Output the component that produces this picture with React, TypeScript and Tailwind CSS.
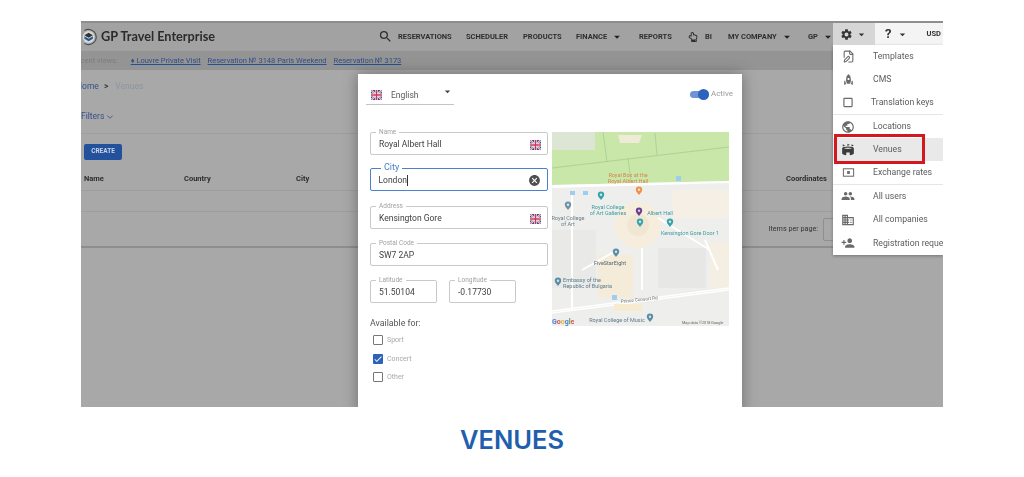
import type { ReactNode } from "react";
import {
  MdArrowDropDown,
  MdCancel,
  MdCheck,
  MdOutlineCropSquare,
  MdOutlineDomain,
  MdPeople,
  MdPersonAdd,
  MdPublic,
  MdRocket,
  MdSearch,
  MdSettings,
  MdStadium,
} from "react-icons/md";
import { LuFilePen, LuChevronDown } from "react-icons/lu";
import { FaRegHandPointUp } from "react-icons/fa";

const UkFlag = () => (
  <svg viewBox="0 0 60 50" preserveAspectRatio="none" className="w-[11px] h-[10px] shrink-0">
    <rect width="60" height="50" fill="#3f4f8f" />
    <path d="M0 0L60 50M60 0L0 50" stroke="#fff" strokeWidth="9" />
    <path d="M0 0L60 50M60 0L0 50" stroke="#c8385a" strokeWidth="4" />
    <path d="M30 0V50M0 25H60" stroke="#fff" strokeWidth="14" />
    <path d="M30 0V50M0 25H60" stroke="#c8385a" strokeWidth="8" />
  </svg>
);

const Logo = () => (
  <svg viewBox="0 0 20 20" className="w-[17px] h-[20px] shrink-0">
    <path d="M4 2.5A9 9 0 1 1 4 17.5" fill="none" stroke="#444" strokeWidth="1.2" />
    <circle cx="9" cy="10" r="7" fill="#d9d9d9" />
    <path d="M9 5l5 3-5 3-5-3z" fill="#333" />
    <path d="M4 9l5 3 5-3v3l-5 3-5-3z" fill="#1f5c96" />
  </svg>
);

const ExchangeIcon = () => (
  <svg viewBox="0 0 14 14" className="w-[13px] h-[13px]">
    <rect x="1.5" y="3" width="11" height="8" fill="none" stroke="currentColor" strokeWidth="1.1" />
    <rect x="5.5" y="5.5" width="3" height="3" fill="currentColor" />
  </svg>
);

const NavLink = ({ children, caret, className = "" }: { children: ReactNode; caret?: boolean; className?: string }) => (
  <div className={`flex items-center shrink-0 text-[7.5px] font-bold text-[#2e2e2e] ${className}`}>
    <span>{children}</span>
    {caret && <MdArrowDropDown className="ml-[3px] text-[14px] text-[#222]" />}
  </div>
);

const Field = ({
  label,
  value,
  className,
  flag,
}: {
  label: string;
  value: string;
  className: string;
  flag?: boolean;
}) => (
  <div className={`relative flex items-center justify-between h-[23px] border border-[#c9c9c9] rounded-[2px] pl-2 pr-[6px] pt-[2px] ${className}`}>
    <span className="absolute left-[5px] -top-[5px] bg-white px-[3px] text-[6.5px] leading-[8px] text-[#a2a2a2]">{label}</span>
    <span className="text-[8.5px] text-[#3f3f3f]">{value}</span>
    {flag && <UkFlag />}
  </div>
);

const Check = ({ label, checked }: { label: string; checked?: boolean }) => (
  <div className="flex items-center h-[18.5px] pl-[3px]">
    {checked ? (
      <span className="flex items-center justify-center w-[10px] h-[10px] rounded-[1px] bg-[#2d62b8]">
        <MdCheck className="text-white text-[10px]" />
      </span>
    ) : (
      <span className="w-[10px] h-[10px] rounded-[1px] border border-[#777]" />
    )}
    <span className="ml-[4px] text-[7px] text-[#a8a8a8]">{label}</span>
  </div>
);

const Pin = ({ x, y, color }: { x: number; y: number; color: string }) => (
  <g>
    <path d={`M${x} ${y + 5}c-1.6-2.2-3.2-3.4-3.2-5.2a3.2 3.2 0 0 1 6.4 0c0 1.8-1.6 3-3.2 5.2z`} fill={color} />
    <circle cx={x} cy={y - 0.3} r="1.2" fill="#fff" fillOpacity="0.75" />
  </g>
);

const MapPicture = () => (
  <svg viewBox="0 0 177 194" className="w-[177px] h-[194px] shrink-0 font-['Roboto',sans-serif]">
    <rect width="177" height="194" fill="#eeeeec" />
    <path d="M0 0H177V49L0 53z" fill="#c8e7a9" />
    <rect width="43" height="18" fill="#dde6d4" />
    <path d="M66 3h24l-3 8H68z" fill="#eeebd7" />
    <path d="M0 36L177 15M51 0l4 30M103 1l2 22M76 26l3 24" stroke="#a3c98c" strokeWidth="0.7" fill="none" />
    <path d="M0 53L177 49V51L0 56z" fill="#fff" />
    <rect x="120" y="58" width="57" height="28" fill="#f5efe5" />
    <rect x="0" y="98" width="44" height="58" fill="#e9e9e7" />
    <rect x="46" y="123" width="35" height="43" fill="#f4ecd9" />
    <rect x="106" y="116" width="48" height="40" fill="#e7e7e5" />
    <rect x="158" y="110" width="19" height="46" fill="#f5efe3" />
    <circle cx="86" cy="93" r="23" fill="#f6eddd" />
    <circle cx="86" cy="93" r="11" fill="#f0e6d3" />
    <path d="M90 116V158M106 86L158 118M20 60V178M30 138L62 120M153 108L166 138" stroke="#fff" strokeWidth="2" fill="none" />
    <path d="M0 179L177 156M0 181L177 158" stroke="#fff" strokeWidth="1.6" />
    <rect x="62" y="172" width="28" height="7" fill="#f6ead0" />
    <rect x="124" y="44" width="5" height="5" fill="#9ecdf0" />
    <rect x="18" y="59" width="5" height="4" fill="#9ecdf0" />
    <rect x="31" y="59" width="5" height="4" fill="#9ecdf0" />
    <rect x="60" y="163" width="5" height="5" fill="#9ecdf0" />
    <Pin x={87} y={58} color="#ee8f4b" />
    <Pin x={49} y={63} color="#35a5a8" />
    <Pin x={16} y={73} color="#6e93a8" />
    <Pin x={88} y={90} color="#35a5a8" />
    <Pin x={87} y={79} color="#6b3d90" />
    <Pin x={118} y={90} color="#35a5a8" />
    <Pin x={64} y={120} color="#5d8ca5" />
    <Pin x={6} y={149} color="#5d8ca5" />
    <Pin x={98} y={185} color="#5d8ca5" />
    <g fontSize="5.5" textAnchor="middle">
      <text x="76" y="45" fill="#d9844e">Royal Box at the</text>
      <text x="76" y="51" fill="#d9844e">Royal Albert Hall</text>
      <text x="56" y="77" fill="#3c9ca0">Royal College</text>
      <text x="56" y="83" fill="#3c9ca0">of Art Galleries</text>
      <text x="108" y="83" fill="#3c9ca0">Albert Hall</text>
      <text x="16" y="88" fill="#6b7d88">Royal College</text>
      <text x="16" y="94" fill="#6b7d88">of Art</text>
      <text x="138" y="103" fill="#3c9ca0">Kensington Gore Door 1</text>
      <text x="58" y="133" fill="#56666f">FiveStarEight</text>
      <text x="65" y="190" fill="#5b7a8c">Royal College of Music</text>
    </g>
    <g fontSize="5.5" fill="#5b7a8c">
      <text x="11" y="150">Embassy of the</text>
      <text x="11" y="156">Republic of Bulgaria</text>
    </g>
    <text x="69" y="171" fontSize="4.6" fill="#6f6f6f" transform="rotate(-6 69 171)">Prince Consort Rd</text>
    <text x="0" y="192" fontSize="7" fontWeight="700">
      <tspan fill="#4a7fd8">G</tspan>
      <tspan fill="#d9574a">o</tspan>
      <tspan fill="#e5b83c">o</tspan>
      <tspan fill="#4a7fd8">g</tspan>
      <tspan fill="#53a75c">l</tspan>
      <tspan fill="#d9574a">e</tspan>
    </text>
    <text x="130" y="192" fontSize="3.8" fill="#666">Map data ©2018 Google</text>
  </svg>
);

const menuItems = [
  { label: "Templates", icon: <LuFilePen className="text-[13px]" /> },
  { label: "CMS", icon: <MdRocket className="text-[13px]" /> },
  { label: "Translation keys", icon: <MdOutlineCropSquare className="text-[15px]" />, shift: true, rule: true },
  { label: "Locations", icon: <MdPublic className="text-[14px]" /> },
  { label: "Venues", icon: <MdStadium className="text-[15px] text-[#3c3c3c]" />, active: true },
  { label: "Exchange rates", icon: <ExchangeIcon />, rule: true },
  { label: "All users", icon: <MdPeople className="text-[14px]" /> },
  { label: "All companies", icon: <MdOutlineDomain className="text-[14px]" /> },
  { label: "Registration requests", icon: <MdPersonAdd className="text-[14px]" /> },
];

export default function App() {
  return (
    <div className="w-[1024px] h-[477px] bg-white overflow-hidden font-['Roboto',sans-serif]">
      <div className="pt-[21px] pl-[81px]">
        <div className="relative w-[862px] h-[386px] bg-[#a8a8a8] overflow-hidden blur-[0.5px]">
          {/* nav bar */}
          <div className="flex items-center h-[30px] bg-[#a2a2a2] border-t-2 border-[#8e8e8e] whitespace-nowrap">
            <Logo />
            <span className="ml-[3px] w-[277px] text-[12.7px] font-['Lato',sans-serif] font-bold text-[#2b2b2b]">GP Travel Enterprise</span>
            <MdSearch className="text-[15px] text-[#2e2e2e] -mt-[2px]" />
            <NavLink className="ml-[5px] w-[68px]">RESERVATIONS</NavLink>
            <NavLink className="w-[57px]">SCHEDULER</NavLink>
            <NavLink className="w-[53px]">PRODUCTS</NavLink>
            <NavLink caret className="w-[63px]">FINANCE</NavLink>
            <NavLink className="w-[45px]">REPORTS</NavLink>
            <span className="flex justify-center w-[18px] text-[10px] text-[#2e2e2e]">
              <FaRegHandPointUp />
            </span>
            <NavLink className="w-[26px] pl-[3px]">BI</NavLink>
            <NavLink caret className="w-[80px]">MY COMPANY</NavLink>
            <NavLink caret>GP</NavLink>
          </div>

          {/* recent views */}
          <div className="flex items-center h-[19px] bg-[#949494] text-[7.5px] whitespace-nowrap overflow-hidden">
            <span className="-ml-[9px] text-[#7d7d7d]">Recent views:</span>
            <span className="ml-[13px] text-[#2b4f8e] underline">♦ Louvre Private Visit</span>
            <span className="ml-[7px] text-[#2b4f8e] underline">Reservation № 3148 Paris Weekend</span>
            <span className="ml-[7px] text-[#2b4f8e] underline">Reservation № 3173</span>
          </div>

          {/* breadcrumb */}
          <div className="flex items-center h-[31px] pt-[2px] text-[8.5px] -ml-[5px]">
            <span className="text-[#35508a]">Home</span>
            <span className="ml-[5px] text-[#3a3a3a] font-bold">&gt;</span>
            <span className="ml-[7px] text-[#8d93a3]">Venues</span>
          </div>

          {/* filters */}
          <div className="flex items-center h-[33px] border-b border-[#9e9e9e] text-[8.5px] text-[#35508a] pb-[1px]">
            Filters
            <LuChevronDown className="ml-[1px] text-[10px]" />
          </div>

          <button className="block ml-[3px] mt-[10px] w-[38px] h-[16px] rounded-[2px] bg-[#23519c] text-[6.5px] font-bold text-[#c8d3e6]">
            CREATE
          </button>

          {/* table header */}
          <div className="flex items-center h-[24px] mt-[7px] pt-[1px] border-b border-[#9e9e9e] text-[7.5px] font-bold text-[#2e2e2e]">
            <span className="ml-[3px] w-[100px]">Name</span>
            <span className="w-[112px]">Country</span>
            <span className="w-[490px]">City</span>
            <span>Coordinates</span>
          </div>
          <div className="h-[21px] border-b border-[#9e9e9e]" />
          <div className="flex items-center justify-end h-[36px] border-b-2 border-[#8e8e8e] pr-[100px] text-[7.2px] text-[#333]">
            Items per page:
            <div className="ml-[5px] w-[20px] h-[23px] border border-[#8f8f8f] rounded-[2px]" />
          </div>

          {/* modal */}
          <div className="absolute left-[277px] top-[53px] w-[384px] h-[340px] bg-white shadow-[0_0_14px_rgba(0,0,0,0.35)] pl-[12px] pr-[9px]">
            <div className="flex items-start justify-between pt-[12px]">
              <div className="relative -ml-[4px] flex items-center w-[88px] h-[19px] pl-[5px] border-b border-[#c4c4c4]">
                <UkFlag />
                <span className="ml-[9px] text-[8.5px] text-[#5a5a5a]">English</span>
                <MdArrowDropDown className="absolute right-0 -top-[1px] text-[13px] text-[#444]" />
              </div>
              <div className="flex items-center mt-[2px]">
                <div className="relative w-[19px] h-[7px] rounded-full bg-[#6f94d6]">
                  <div className="absolute right-0 -top-[2px] w-[11px] h-[11px] rounded-full bg-[#2d62bd]" />
                </div>
                <span className="ml-[2px] text-[8px] text-[#9a9a9a]">Active</span>
              </div>
            </div>
            <div className="flex mt-[27px]">
              <div className="w-[182px] shrink-0">
                <Field className="w-[178px]" label="Name" value="Royal Albert Hall" flag />
                <div className="relative flex items-center justify-between w-[178px] h-[23px] mt-[13px] border-[1.5px] border-[#4a80cc] rounded-[2px] pl-[7.5px] pr-[6px] pt-[2px]">
                  <span className="absolute left-[10px] -top-[7px] bg-white px-[3px] text-[9px] leading-[10px] text-[#4a80cc]">City</span>
                  <span className="text-[8.5px] text-[#3f3f3f] border-r border-[#333] leading-[11px]">London</span>
                  <MdCancel className="text-[13px] text-[#4f4f4f]" />
                </div>
                <Field className="w-[178px] mt-[15px]" label="Address" value="Kensington Gore" flag />
                <Field className="w-[178px] mt-[14px]" label="Postal Code" value="SW7 2AP" />
                <div className="flex gap-3 mt-[14px]">
                  <Field className="w-[67px]" label="Latitude" value="51.50104" />
                  <Field className="w-[67px]" label="Longitude" value="-0.17730" />
                </div>
                <div className="mt-[14px] text-[8.8px] text-[#555]">Available for:</div>
                <div className="mt-[1px]">
                  <Check label="Sport" />
                  <Check label="Concert" checked />
                  <Check label="Other" />
                </div>
              </div>
              <MapPicture />
            </div>
          </div>

          {/* gear dropdown */}
          <div className="absolute left-[752px] top-0 w-[110px] whitespace-nowrap">
            <div className="flex items-center h-[24px] bg-[#f4f4f4] border-t-2 border-[#8e8e8e] text-[#333]">
              <div className="flex items-center justify-center w-[42px] h-full bg-[#d6d6d6]">
                <MdSettings className="text-[13px]" />
                <MdArrowDropDown className="ml-[2px] text-[13px]" />
              </div>
              <span className="ml-[10px] text-[13px] font-bold">?</span>
              <MdArrowDropDown className="ml-[5px] text-[13px]" />
              <span className="ml-[17px] text-[7.5px] font-bold">USD</span>
            </div>
            <div className="bg-white shadow-[0_1px_3px_rgba(0,0,0,0.3)] overflow-hidden">
              {menuItems.map((item) => (
                <div
                  key={item.label}
                  className={`flex items-center h-[23.3px] pl-[8px] text-[#5c5c5c] ${item.active ? "bg-[#e9e9e9]" : ""} ${item.rule ? "border-b border-[#e6e6e6]" : ""}`}
                >
                  <span className="flex justify-center w-[14px] shrink-0 text-[#6a6a6a]">{item.icon}</span>
                  <span className={`text-[8.7px] ${item.shift ? "ml-[16px]" : "ml-[18px]"}`}>{item.label}</span>
                </div>
              ))}
            </div>
            <div className="absolute left-[1px] top-[113px] w-[91px] h-[30px] border-[3px] border-[#d3181f]" />
          </div>
        </div>
      </div>
      <h1 className="mt-[18px] text-center text-[25.5px] leading-[30px] font-semibold text-[#1f5fae] font-['Inter',sans-serif]">VENUES</h1>
    </div>
  );
}
